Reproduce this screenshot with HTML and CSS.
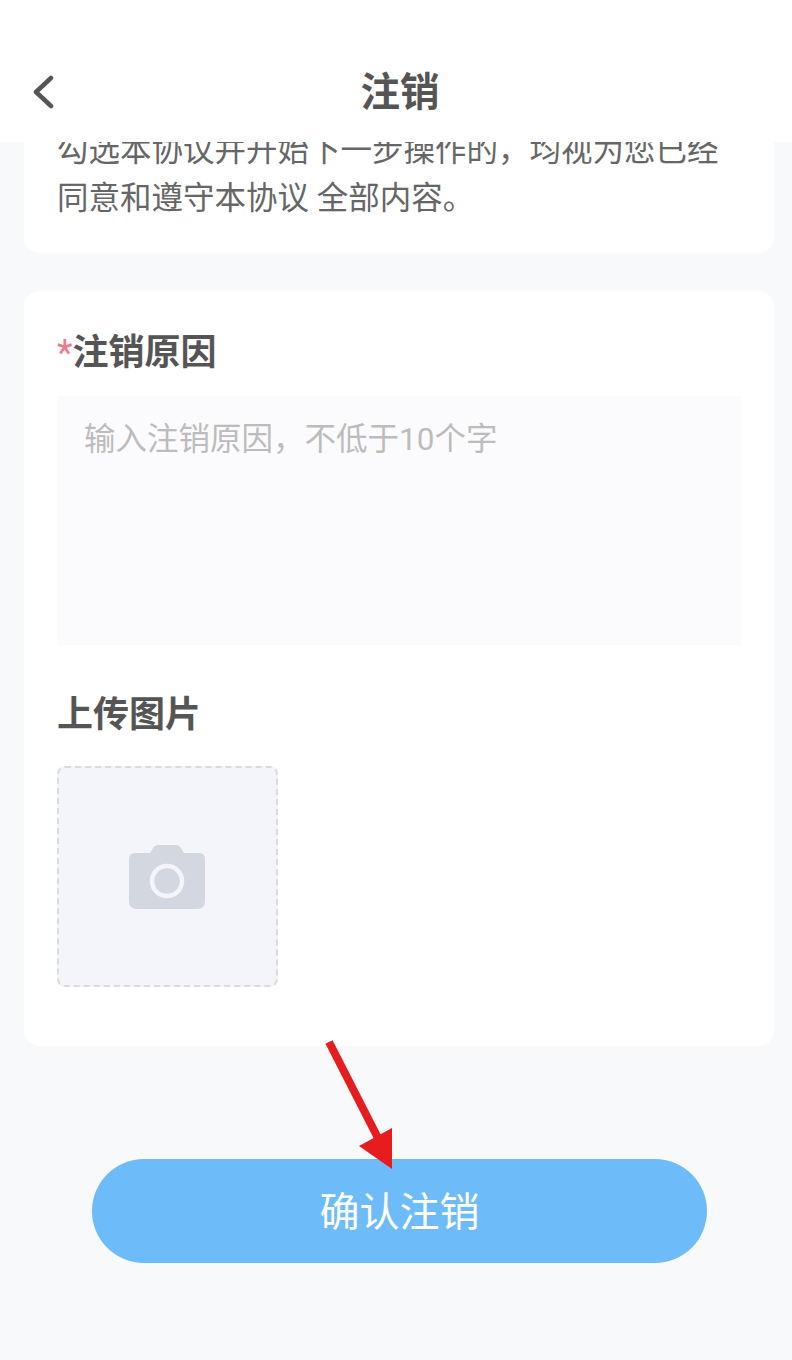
FILE: index.html
```html
<!DOCTYPE html>
<html lang="zh-CN">
<head>
  <meta charset="UTF-8" />
  <meta name="viewport" content="width=device-width, initial-scale=1.0" />
  <title>注销</title>
  <link rel="stylesheet" href="styles.css">
</head>
<body>
  <div class="page">
    <header class="topbar">
      <svg class="back-icon" width="24" height="34" viewBox="0 0 24 34">
        <path d="M20 3 L5 17 L20 31" fill="none" stroke="#555" stroke-width="4.5" stroke-linecap="round" stroke-linejoin="round" />
      </svg>
      <h1>注销</h1>
    </header>

    <section class="card agreement">
      <p>勾选本协议并开始下一步操作的，均视为您已经同意和遵守本协议 全部内容。</p>
    </section>

    <section class="card form">
      <h2 class="reason-label"><span class="required">*</span>注销原因</h2>
      <div class="reason-input">输入注销原因，不低于10个字</div>

      <h2 class="upload-label">上传图片</h2>
      <div class="upload-box">
        <svg class="camera-icon" width="78" height="66" viewBox="0 0 78 66">
          <path d="M7 9 H22 L25 4 Q27 1 30 1 H48 Q51 1 53 4 L56 9 H71 Q77 9 77 15 V57 Q77 65 69 65 H9 Q1 65 1 57 V15 Q1 9 7 9 Z" fill="#d3d7df" />
          <circle cx="39" cy="37" r="15" fill="none" stroke="#f3f5fa" stroke-width="4.5" />
        </svg>
      </div>
    </section>

    <div class="actions">
      <button class="confirm-btn">确认注销</button>
    </div>

    <svg class="arrow" width="80" height="135" viewBox="0 0 80 135">
      <path d="M5 4 L54 100" stroke="#e61c1f" stroke-width="8" fill="none" />
      <polygon points="68,131 35,108 68,90" fill="#e61c1f" />
    </svg>
  </div>
</body>
</html>
```

FILE: styles.css
```css
* {
  box-sizing: border-box;
}

body {
  margin: 0;
  background: #f8f9fa;
  font-family: Roboto, "Noto Sans CJK SC", sans-serif;
  color: #555;
}

.page {
  position: relative;
  height: 1360px;
  overflow: hidden;
}

.topbar {
  position: relative;
  z-index: 1;
  height: 142px;
  background: white;
  display: flex;
  justify-content: center;
  padding: 63px 0 0 8px;
}

.topbar h1 {
  margin: 0;
  font-size: 39.5px;
  line-height: 60px;
  font-weight: bold;
}

.back-icon {
  position: absolute;
  left: 31px;
  top: 75px;
}

.card {
  background: white;
  border-radius: 16px;
  margin: 0 18px 0 24px;
}

.agreement {
  margin-top: -15px;
  padding: 0 33px 30px;
  border-radius: 0 0 16px 16px;
}

.agreement p {
  margin: 0;
  font-size: 31.5px;
  line-height: 48px;
  color: #666;
}

.form {
  margin-top: 38px;
  height: 755px;
  padding: 34px 33px 0;
}

.reason-label,
.upload-label {
  margin: 0;
  font-size: 36px;
  line-height: 56px;
  font-weight: bold;
}

.required {
  color: #f5758a;
  font-weight: normal;
}

.reason-input {
  margin-top: 15px;
  height: 249px;
  background: #fbfbfd;
  padding: 21px 27px;
  font-size: 31.5px;
  line-height: 46px;
  color: #bcbcbc;
}

.upload-label {
  margin-top: 42px;
}

.upload-box {
  margin-top: 23px;
  width: 221px;
  height: 221px;
  background: #f3f5fa;
  border: 2px dashed #d9dbe0;
  border-radius: 8px;
  display: flex;
  justify-content: center;
  align-items: center;
}

.camera-icon {
  margin-right: 2px;
}

.actions {
  margin-top: 113px;
  padding-left: 92px;
}

.confirm-btn {
  width: 615px;
  height: 104px;
  border: none;
  padding: 0 0 4px;
  border-radius: 52px;
  background: #6ebbfa;
  color: white;
  font-family: inherit;
  font-size: 40px;
}

.arrow {
  position: absolute;
  left: 324px;
  top: 1038px;
}
```
